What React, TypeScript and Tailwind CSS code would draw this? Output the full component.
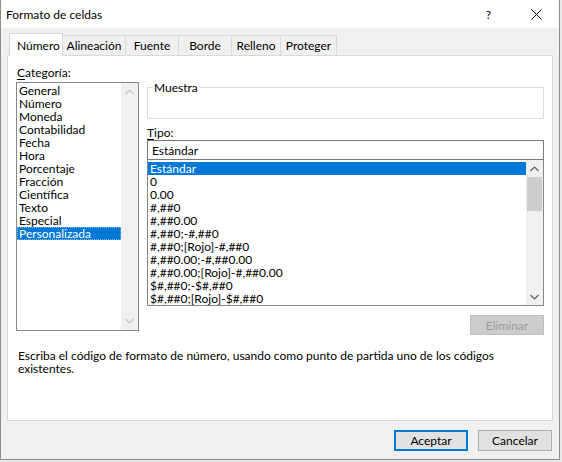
import React from 'react';

const categorias = [
  'General',
  'Número',
  'Moneda',
  'Contabilidad',
  'Fecha',
  'Hora',
  'Porcentaje',
  'Fracción',
  'Científica',
  'Texto',
  'Especial',
  'Personalizada',
];

const tipos = [
  'Estándar',
  '0',
  '0.00',
  '#,##0',
  '#,##0.00',
  '#,##0;-#,##0',
  '#,##0;[Rojo]-#,##0',
  '#,##0.00;-#,##0.00',
  '#,##0.00;[Rojo]-#,##0.00',
  '$#,##0;-$#,##0',
  '$#,##0;[Rojo]-$#,##0',
];

const tabs = ['Número', 'Alineación', 'Fuente', 'Borde', 'Relleno', 'Proteger'];
const tabWidths = [54, 63, 53, 53, 49, 56];

// little chevron used by the scrollbar arrows
const Chevron: React.FC<{ up?: boolean; color?: string }> = ({ up, color = '#a3a3a3' }) => (
  <svg width="9" height="6" viewBox="0 0 9 6">
    <path d={up ? 'M0.5 5 L4.5 1 L8.5 5' : 'M0.5 1 L4.5 5 L8.5 1'} fill="none" stroke={color} strokeWidth="1.2" />
  </svg>
);

const App: React.FC = () => {
  return (
    <div className="w-[562px] h-[462px] bg-[#e9e9e9] font-['Segoe_UI','Lato',sans-serif] text-[12px] text-black leading-[13px]">
      <div className="w-[560px] h-[460px] bg-[#f0f0f0] border-l border-r border-b border-[#8c8c8c] flex flex-col">
        {/* title bar */}
        <div className="h-[28px] bg-white flex items-center shrink-0">
          <span className="ml-[5px] text-[12px]">Formato de celdas</span>
          <span className="ml-auto mr-[40px] text-[12px]">?</span>
          <svg width="11" height="11" viewBox="0 0 11 11" className="mr-[17px]">
            <path d="M0.5 0.5 L10.5 10.5 M10.5 0.5 L0.5 10.5" stroke="#000" strokeWidth="1" />
          </svg>
        </div>

        <div className="flex flex-col px-[6px] pt-[5px]">
          {/* tabs */}
          <div className="flex items-end h-[22px] pl-[2px]">
            {tabs.map((t, i) =>
              i === 0 ? (
                <div
                  key={t}
                  className="h-[23px] pl-[7px] bg-white border border-b-0 border-[#d9d9d9] flex items-center -mb-px relative z-10"
                  style={{ width: tabWidths[i] }}
                >
                  {t}
                </div>
              ) : (
                <div
                  key={t}
                  className="h-[20px] bg-[#f0f0f0] border border-l-0 border-b-0 border-[#d9d9d9] flex items-center justify-center"
                  style={{ width: tabWidths[i] }}
                >
                  {t}
                </div>
              )
            )}
          </div>

          {/* tab page */}
          <div className="h-[366px] bg-white border border-[#d9d9d9] flex flex-col px-[8px]">
            <div className="flex">
              {/* left column */}
              <div className="flex flex-col w-[123px]">
                <div className="mt-[10px] h-[13px] ml-[1px]">
                  <span className="underline underline-offset-2">C</span>ategoría:
                </div>
                <div className="mt-[3px] h-[249px] border border-[#828790] flex">
                  <div className="flex-1 pt-[1px]">
                    {categorias.map((c) => (
                      <div
                        key={c}
                        className={
                          c === 'Personalizada'
                            ? 'h-[13px] pl-[2px] bg-[#0078d7] text-white outline outline-1 outline-dotted outline-[#7fb8e8] -outline-offset-1'
                            : 'h-[13px] pl-[2px]'
                        }
                      >
                        {c}
                      </div>
                    ))}
                  </div>
                  <div className="w-[17px] bg-[#f0f0f0] flex flex-col justify-between items-center py-[6px]">
                    <Chevron up color="#c4c4c4" />
                    <Chevron color="#c4c4c4" />
                  </div>
                </div>
              </div>

              {/* right column */}
              <div className="flex flex-col ml-[8px] w-[397px]">
                <div className="mt-[31px] h-[32px] border border-[#dcdcdc] relative">
                  <span className="absolute left-[5px] -top-[7px] bg-white px-[1px]">Muestra</span>
                </div>
                <div className="mt-[7px] h-[13px]">
                  <span className="underline underline-offset-2">T</span>ipo:
                </div>
                <div className="mt-[1px] h-[20px] border border-[#7a7a7a] flex items-center pl-[4px]">Estándar</div>
                <div className="h-[146px] border border-[#828790] border-t-0 flex">
                  <div className="flex-1 pt-[2px]">
                    {tipos.map((t) => (
                      <div
                        key={t}
                        className={t === 'Estándar' ? 'h-[13px] pl-[2px] bg-[#0078d7] text-white' : 'h-[13px] pl-[2px]'}
                      >
                        {t}
                      </div>
                    ))}
                  </div>
                  <div className="w-[17px] bg-[#f0f0f0] flex flex-col items-center">
                    <div className="h-[17px] flex items-center justify-center">
                      <Chevron up color="#606060" />
                    </div>
                    <div className="w-[15px] h-[34px] bg-[#cdcdcd]" />
                    <div className="flex-1" />
                    <div className="h-[17px] flex items-center justify-center">
                      <Chevron color="#606060" />
                    </div>
                  </div>
                </div>
                <div className="flex justify-end mt-[9px]">
                  <div className="w-[74px] h-[20px] bg-[#cccccc] border border-[#bfbfbf] text-[#9a9a9a] flex items-center justify-center">
                    Eliminar
                  </div>
                </div>
              </div>
            </div>

            <div className="mt-[14px] ml-[2px] leading-[13px]">
              Escriba el código de formato de número, usando como punto de partida uno de los códigos
              <br />
              existentes.
            </div>
          </div>

          {/* buttons */}
          <div className="flex justify-end gap-[10px] mt-[9px] pr-[1px]">
            <button className="w-[74px] h-[21px] bg-[#e1e1e1] border-2 border-[#0078d7] flex items-center justify-center">
              Aceptar
            </button>
            <button className="w-[74px] h-[21px] bg-[#e1e1e1] border border-[#adadad] flex items-center justify-center">
              Cancelar
            </button>
          </div>
        </div>
      </div>
    </div>
  );
};

export default App;
